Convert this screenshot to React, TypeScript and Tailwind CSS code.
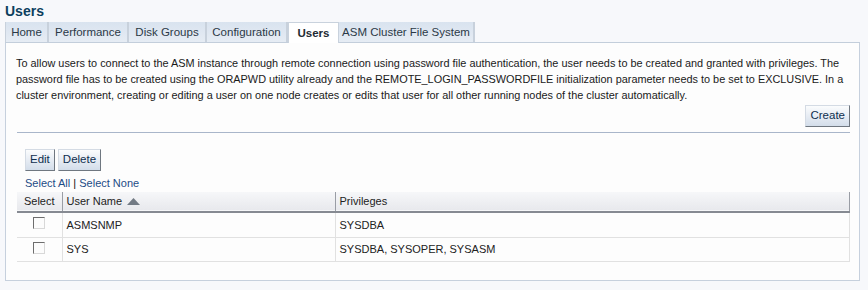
import React from "react"

const TABS = [
  { label: "Home", w: "w-[44px]" },
  { label: "Performance", w: "w-[80px]" },
  { label: "Disk Groups", w: "w-[78px]" },
  { label: "Configuration", w: "w-[81px]" },
  { label: "Users", w: "w-[51px]" },
  { label: "ASM Cluster File System", w: "w-[136px]" },
]

const USERS = [
  { name: "ASMSNMP", privileges: "SYSDBA" },
  { name: "SYS", privileges: "SYSDBA, SYSOPER, SYSASM" },
]

function Button({ label }: { label: string }) {
  return (
    <button className="h-[22px] px-[4px] text-[11.5px] text-[#0f2f4f] bg-gradient-to-b from-[#fbfcfd] to-[#d3ddea] border border-t-[#d4dbe4] border-l-[#d4dbe4] border-r-[#6f7780] border-b-[#6f7780] leading-none">
      {label}
    </button>
  )
}

function Checkbox() {
  return (
    <span className="block w-[12px] h-[12px] bg-[#fcfcfc] border border-t-[#6d6d6d] border-l-[#6d6d6d] border-r-[#d8d8d8] border-b-[#d8d8d8]" />
  )
}

export default function App() {
  return (
    <div className="w-[868px] h-[290px] bg-[#f7f8fb] pl-[5px] pr-[8px] pt-[1px] font-['Liberation_Sans',Arial,sans-serif] text-[11px] text-[#222]">
      <h1 className="text-[14px] font-bold text-[#0d3f5e] leading-[20px] h-[21px]">Users</h1>

      {/* Tabs */}
      <div className="flex h-[21px] border-b border-[#c3cedb]">
        {TABS.map((t, i) => {
          const active = t.label === "Users"
          return (
            <div
              key={t.label}
              className={
                active
                  ? `${t.w} shrink-0 h-[21px] text-center leading-[20px] text-[11.5px] bg-white font-bold text-[#222a33] border-x border-t border-[#c9d2dd] -mb-px`
                  : `${t.w} shrink-0 h-[20px] text-center leading-[20px] text-[11.5px] bg-gradient-to-b from-[#d9e3ef] to-[#e6ecf4] text-[#2b3947] border-r-2 border-[#c8d1dc] ${i === 0 ? "border-l" : ""}`
              }
            >
              {t.label}
            </div>
          )
        })}
      </div>

      {/* Panel */}
      <div className="h-[238px] bg-[#fdfdfd] border-l border-r border-b border-[#c6d0dd] px-[10px] pt-[12px]">
        <p className="leading-[16px] text-[10.9px] text-[#1a1a1a]">
          To allow users to connect to the ASM instance through remote connection using password file authentication, the user needs to be created and granted with privileges. The password file has to be created using the ORAPWD utility already and the REMOTE_LOGIN_PASSWORDFILE initialization parameter needs to be set to EXCLUSIVE. In a cluster environment, creating or editing a user on one node creates or edits that user for all other running nodes of the cluster automatically.
        </p>

        <div className="flex justify-end mt-[2px] mr-[-1px]">
          <Button label="Create" />
        </div>

        <div className="mt-[5px] ml-[1px] mr-[-1px] h-px bg-[#a9b6ca]" />

        <div className="ml-[1px] mr-[-1px]">
          <div className="flex gap-[3px] mt-[16px] pl-[8px]">
            <Button label="Edit" />
            <Button label="Delete" />
          </div>

          <div className="pl-[8px] mt-[5px] leading-[14px] text-[#1d4c86]">
            Select All <span className="text-[#111]">|</span> Select None
          </div>

          <table className="mt-[2px] w-full border-collapse">
            <thead>
              <tr className="h-[20px] bg-gradient-to-b from-[#f6f7f9] to-[#e8e9ed] border-b-2 border-[#868a92]">
                <th className="w-[45px] font-normal text-center border-r border-[#999da5] text-[#222]">Select</th>
                <th className="w-[273px] font-normal text-left pl-[4px] border-r border-[#999da5] text-[#222]">
                  <span className="inline-flex items-center gap-[5px]">
                    User Name
                    <svg width="13" height="7" viewBox="0 0 13 7">
                      <path d="M0 7 L6.5 0 L13 7 Z" fill="#727a84" />
                    </svg>
                  </span>
                </th>
                <th className="font-normal text-left pl-[4px] border-r border-[#999da5] text-[#222]">Privileges</th>
              </tr>
            </thead>
            <tbody>
              {USERS.map((u, i) => (
                <tr key={u.name} className={`${i === 0 ? "h-[25px]" : "h-[24px]"} border-b border-[#e1e1e1]`}>
                  <td className="border-r border-[#e1e1e1]">
                    <div className="flex justify-center pb-[3px]"><Checkbox /></div>
                  </td>
                  <td className="pl-[4px] border-r border-[#e1e1e1]">{u.name}</td>
                  <td className="pl-[4px] border-r border-[#e1e1e1]">{u.privileges}</td>
                </tr>
              ))}
            </tbody>
          </table>
        </div>
      </div>
    </div>
  )
}
